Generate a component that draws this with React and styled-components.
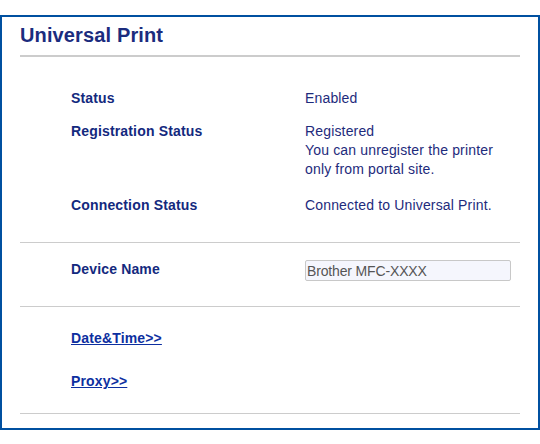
import styled, { createGlobalStyle } from "styled-components";

const Global = createGlobalStyle`
  body {
    margin: 0;
    background: #fff;
    font-family: "Liberation Sans", Arial, sans-serif;
  }
`;

const Page = styled.div`
  padding-top: 15px;
`;

const Frame = styled.div`
  box-sizing: border-box;
  width: 540px;
  border: 2px solid #0050a0;
  padding: 7px 18px 14px;
`;

const Title = styled.h1`
  margin: 0;
  font-size: 20px;
  line-height: 23px;
  font-weight: bold;
  letter-spacing: 0.13px;
  color: #1b2c7e;
  padding-bottom: 8px;
  border-bottom: 2px solid #cccccc;
`;

const Section = styled.div`
  display: flex;
  flex-direction: column;
  gap: ${(p) => p.gap || 0}px;
  padding: ${(p) => p.top}px 0 ${(p) => p.bottom}px 51px;
  border-bottom: 1px solid #cccccc;
`;

const Row = styled.div`
  display: flex;
  align-items: flex-start;
  margin-top: ${(p) => p.space || 0}px;
  font-size: 14px;
  line-height: 19px;
  letter-spacing: 0.16px;
`;

const Label = styled.div`
  width: 234px;
  flex: none;
  padding-top: ${(p) => p.nudge || 0}px;
  font-weight: bold;
  color: #13297e;
`;

const Value = styled.div`
  color: #1e2b7c;
`;

const NameInput = styled.input`
  box-sizing: border-box;
  width: 206px;
  height: 21px;
  margin: 1px 0 0;
  padding: 0 1px;
  border: 1px solid #c8c8c8;
  border-radius: 2px;
  background: #f5f6fd;
  font-family: "Liberation Sans", Arial, sans-serif;
  font-size: 14px;
  letter-spacing: -0.15px;
  color: #555555;
  outline: none;
`;

const Link = styled.a`
  display: block;
  width: fit-content;
  font-size: 14px;
  line-height: 19px;
  font-weight: bold;
  letter-spacing: 0.15px;
  color: #0d2fa0;
  text-decoration: underline;
`;

const App = () => {
  return (
    <Page>
      <Global />
      <Frame>
        <Title>Universal Print</Title>
        <Section top={32} bottom={27}>
          <Row>
            <Label>Status</Label>
            <Value>Enabled</Value>
          </Row>
          <Row space={14}>
            <Label>Registration Status</Label>
            <Value>
              Registered
              <br />
              You can unregister the printer
              <br />
              only from portal site.
            </Value>
          </Row>
          <Row space={17}>
            <Label>Connection Status</Label>
            <Value>Connected to Universal Print.</Value>
          </Row>
        </Section>
        <Section top={16} bottom={25}>
          <Row>
            <Label nudge={1}>Device Name</Label>
            <NameInput defaultValue="Brother MFC-XXXX" />
          </Row>
        </Section>
        <Section top={22} bottom={22} gap={24}>
          <Link href="#">Date&amp;Time&gt;&gt;</Link>
          <Link href="#">Proxy&gt;&gt;</Link>
        </Section>
      </Frame>
    </Page>
  );
};

export default App;
